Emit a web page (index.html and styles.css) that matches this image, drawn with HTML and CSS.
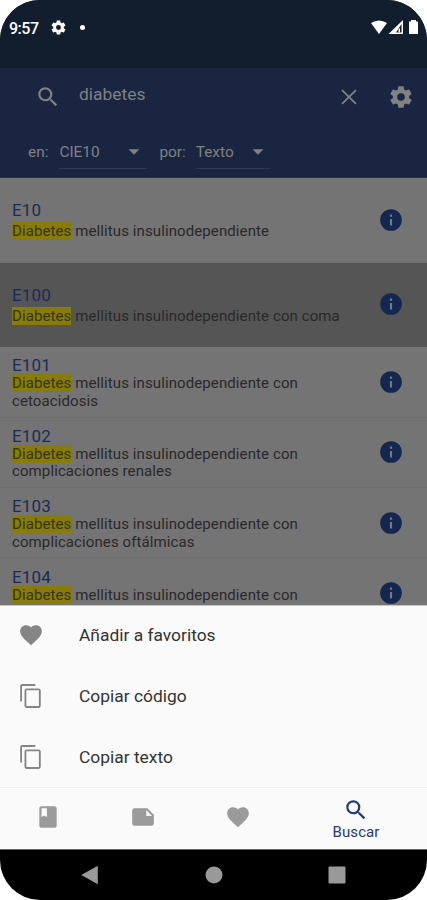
FILE: index.html
```
<!DOCTYPE html>
<html lang="es">
<head>
<meta charset="utf-8">
<title>CIE10</title>
<link rel="stylesheet" href="styles.css">
</head>
<body>
<svg class="defs" viewBox="0 0 24 24">
  <symbol id="search" viewBox="0 0 24 24"><path d="M15.5 14h-.79l-.28-.27A6.47 6.47 0 0 0 16 9.5 6.5 6.5 0 1 0 9.5 16c1.61 0 3.09-.59 4.23-1.57l.27.28v.79l5 4.99L20.49 19l-4.99-5zm-6 0a4.5 4.5 0 1 1 0-9 4.5 4.5 0 0 1 0 9z"/></symbol>
  <symbol id="close" viewBox="0 0 24 24"><path d="M19 6.200 17.800 5 12 10.800 6.200 5 5 6.200 10.800 12 5 17.800 6.200 19 12 13.200 17.800 19 19 17.800 13.200 12z"/></symbol>
  <symbol id="gear" viewBox="0 0 24 24"><path d="M19.43 12.98c.04-.32.07-.64.07-.98s-.03-.66-.07-.98l2.11-1.65c.19-.15.24-.42.12-.64l-2-3.46c-.12-.22-.39-.3-.61-.22l-2.49 1c-.52-.4-1.08-.73-1.69-.98l-.38-2.65A.49.49 0 0 0 14 2h-4c-.25 0-.46.18-.49.42l-.38 2.65c-.61.25-1.17.59-1.69.98l-2.49-1c-.23-.09-.49 0-.61.22l-2 3.46c-.13.22-.07.49.12.64l2.11 1.65c-.04.32-.07.65-.07.98s.03.66.07.98l-2.11 1.65c-.19.15-.24.42-.12.64l2 3.46c.12.22.39.3.61.22l2.49-1c.52.4 1.08.73 1.69.98l.38 2.65c.03.24.24.42.49.42h4c.25 0 .46-.18.49-.42l.38-2.65c.61-.25 1.17-.59 1.69-.98l2.49 1c.23.09.49 0 .61-.22l2-3.46c.12-.22.07-.49-.12-.64l-2.11-1.65zM12 15.5a3.5 3.5 0 1 1 0-7 3.5 3.5 0 0 1 0 7z"/></symbol>
  <symbol id="info" viewBox="0 0 24 24"><circle class="info-mark" cx="12" cy="12" r="9"/><path d="M12 2a10 10 0 1 0 0 20 10 10 0 0 0 0-20zm1 15h-2v-6h2v6zm0-8h-2V7h2v2z"/></symbol>
  <symbol id="heart" viewBox="0 0 24 24"><path d="m12 21.35-1.45-1.32C5.4 15.36 2 12.28 2 8.5 2 5.42 4.42 3 7.5 3c1.74 0 3.41.81 4.5 2.09C13.09 3.81 14.76 3 16.5 3 19.58 3 22 5.42 22 8.5c0 3.78-3.4 6.86-8.55 11.54L12 21.35z"/></symbol>
  <symbol id="copy" viewBox="0 0 24 24"><path d="M16 1H4c-1.1 0-2 .9-2 2v14h1.700V2.700H16V1zm3 4H8c-1.1 0-2 .9-2 2v14c0 1.1.9 2 2 2h11c1.1 0 2-.9 2-2V7c0-1.1-.9-2-2-2zm.3 16.300H7.700V6.700h11.600v14.600z"/></symbol>
  <symbol id="book" viewBox="0 0 24 24"><path fill-rule="evenodd" d="M18 2H6c-1.100 0-2 .9-2 2v16c0 1.100.9 2 2 2h12c1.100 0 2-.9 2-2V4c0-1.100-.9-2-2-2zM6 4h5v8l-2.500-1.500L6 12V4z"/></symbol>
  <symbol id="note" viewBox="0 0 24 24"><path d="m22 10-6-6H4c-1.100 0-2 .9-2 2v12.010c0 1.100.9 1.990 2 1.990h16c1.100 0 2-.9 2-2v-8zm-7-4.500 5.500 5.500H15V5.500z"/></symbol>
  <symbol id="drop" viewBox="0 0 24 24"><path d="m7 9.500 5 5 5-5z"/></symbol>
</svg>

<div class="phone">
  <header class="status">
    <span class="clock">9:57</span>
    <svg class="status-gear"><use href="#gear"/></svg>
    <span class="dot"></span>
    <svg class="signals" viewBox="0 0 50 18">
      <path d="M1 4Q9-1 17 4L9 15z"/>
      <path fill-rule="evenodd" d="M18.500 15 33 1v14zM26 13.500h5.500V5z"/>
      <path d="M28.500 13.500h1.500V9l-1.500 1z"/>
      <path d="M39 2.500h2V1h5v1.500h2V15h-9z"/>
    </svg>
  </header>

  <section class="appbar">
    <div class="search-row">
      <svg class="icon"><use href="#search"/></svg>
      <span class="query">diabetes</span>
      <svg class="icon close"><use href="#close"/></svg>
      <svg class="icon"><use href="#gear"/></svg>
    </div>
    <div class="filters">
      <span class="label">en:</span>
      <div class="select book-select"><span>CIE10</span><svg class="icon"><use href="#drop"/></svg></div>
      <span class="label">por:</span>
      <div class="select field-select"><span>Texto</span><svg class="icon"><use href="#drop"/></svg></div>
    </div>
  </section>

  <main class="results">
    <article class="row short">
      <div class="text"><h2>E10</h2><p><mark>Diabetes</mark> mellitus insulinodependiente</p></div>
      <svg class="icon"><use href="#info"/></svg>
    </article>
    <article class="row short selected">
      <div class="text"><h2>E100</h2><p><mark>Diabetes</mark> mellitus insulinodependiente con coma</p></div>
      <svg class="icon"><use href="#info"/></svg>
    </article>
    <article class="row">
      <div class="text"><h2>E101</h2><p><mark>Diabetes</mark> mellitus insulinodependiente con<br>cetoacidosis</p></div>
      <svg class="icon"><use href="#info"/></svg>
    </article>
    <article class="row">
      <div class="text"><h2>E102</h2><p><mark>Diabetes</mark> mellitus insulinodependiente con<br>complicaciones renales</p></div>
      <svg class="icon"><use href="#info"/></svg>
    </article>
    <article class="row">
      <div class="text"><h2>E103</h2><p><mark>Diabetes</mark> mellitus insulinodependiente con<br>complicaciones oftálmicas</p></div>
      <svg class="icon"><use href="#info"/></svg>
    </article>
    <article class="row">
      <div class="text"><h2>E104</h2><p><mark>Diabetes</mark> mellitus insulinodependiente con<br>&nbsp;</p></div>
      <svg class="icon"><use href="#info"/></svg>
    </article>
  </main>

  <section class="sheet">
    <div class="action"><svg class="icon"><use href="#heart"/></svg><span>Añadir a favoritos</span></div>
    <div class="action"><svg class="icon"><use href="#copy"/></svg><span>Copiar código</span></div>
    <div class="action"><svg class="icon"><use href="#copy"/></svg><span>Copiar texto</span></div>
  </section>

  <nav class="tabs">
    <svg class="icon"><use href="#book"/></svg>
    <svg class="icon"><use href="#note"/></svg>
    <svg class="icon"><use href="#heart"/></svg>
    <div class="active"><svg class="icon"><use href="#search"/></svg><span>Buscar</span></div>
  </nav>

  <footer class="system">
    <svg viewBox="0 0 20 20"><path d="M.2 10 16.800 .8v18.400z"/></svg>
    <svg viewBox="0 0 20 20"><circle cx="10" cy="10" r="8.500"/></svg>
    <svg viewBox="0 0 20 20"><rect x="1.500" y="1.500" width="17" height="17" rx="1"/></svg>
  </footer>
</div>
</body>
</html>
```
FILE: styles.css
```
* { box-sizing: border-box; }
body { margin: 0; background: #fff; font-family: Roboto, sans-serif; }
.defs { display: none; }
.phone {
  width: 427px;
  height: 900px;
  display: flex;
  flex-direction: column;
  overflow: hidden;
  border-radius: 40px;
  background: #000;
}
.icon { width: 26px; height: 26px; flex: none; fill: currentColor; }

.status {
  height: 68px;
  flex: none;
  display: flex;
  align-items: flex-start;
  padding: 19px 7px 0 9px;
  background: #121e2e;
  color: #fff;
  fill: #fff;
}
.clock { font-size: 16px; line-height: 19px; font-weight: 500; width: 30px; letter-spacing: -0.5px; }
.status-gear { width: 17px; height: 17px; margin-left: 11px; }
.dot { width: 5px; height: 5px; margin: 6px 0 0 13px; border-radius: 50%; background: #fff; }
.signals { width: 50px; height: 18px; margin-left: auto; }

.appbar { height: 110px; flex: none; background: #1a2541; color: #7f8183; border-bottom: 1px solid #263358; }
.search-row { height: 58px; display: flex; align-items: center; padding: 0 13px 0 35px; }
.query { margin: -6px 0 0 18px; font-size: 17.4px; }
.search-row .close { margin-left: auto; margin-right: 26px; }
.filters { height: 42px; display: flex; align-items: center; padding-left: 28px; font-size: 15.4px; margin-top: 5px; }
.select {
  height: 33px;
  display: flex;
  align-items: center;
  justify-content: space-between;
  border-bottom: 1px solid #2c3b58;
}
.book-select { width: 88px; margin: 0 12px 0 11px; }
.field-select { width: 75px; margin-left: 10px; }

.results { height: 427px; flex: none; overflow: hidden; background: #747474; color: #292929; }
.row {
  height: 70.4px;
  display: flex;
  align-items: center;
  justify-content: space-between;
  padding: 0 23px 0 12px;
  border-bottom: 1px solid #6f6f6f;
}
.row.short { height: 84.600px; }
.row.selected { background: #555; border-color: #555; }
.row .icon { color: #14274f; }
.info-mark { fill: #747a85; }
.text { padding-top: 2px; }
h2 { margin: 0; font-size: 17px; line-height: 20px; font-weight: 400; letter-spacing: 0.2px; color: #1c2b58; }
p { margin: 0; font-size: 15px; line-height: 17.4px; letter-spacing: 0.1px; white-space: nowrap; }
.short .text { padding-top: 4px; }
.short p { line-height: 23px; }
mark { background: #877c0a; color: #373408; }

.sheet { height: 182px; flex: none; background: #fafafa; color: #333; border-top: 1px solid #c4c4c4; }
.action { height: 60.800px; display: flex; align-items: center; padding: 0 0 2px 18px; font-size: 17.4px; }
.action .icon { color: #858585; margin-right: 35px; }

.tabs {
  height: 62px;
  flex: none;
  display: grid;
  grid-template-columns: 95px 95px 95px 142px;
  align-items: center;
  justify-items: center;
  background: #fafafa;
  color: #9b9b9b;
  border-top: 1px solid #eee;
}
.tabs > .icon { margin-bottom: 4px; }
.active { display: flex; flex-direction: column; align-items: center; color: #24397a; font-size: 15px; line-height: 18px; letter-spacing: 0.1px; }
.active .icon { height: 26px; }

.system { height: 51px; flex: none; display: flex; justify-content: center; gap: 103px; align-items: center; border-top: 1px solid #666; padding-bottom: 1px; }
.system svg { width: 20px; height: 20px; fill: #999; }
```
